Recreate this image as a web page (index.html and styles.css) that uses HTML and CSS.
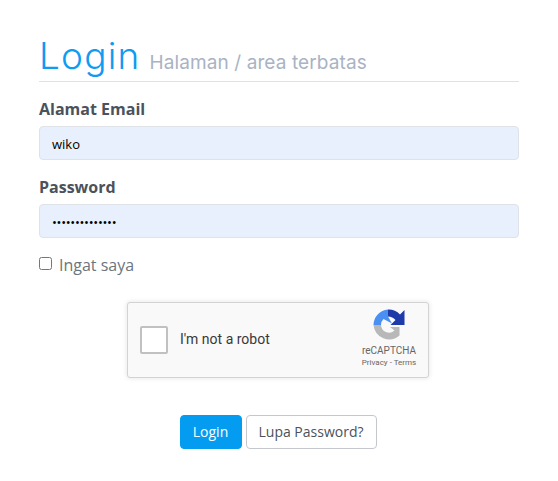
FILE: index.html
```html
<!DOCTYPE html>
<html lang="id">
<head>
<meta charset="utf-8">
<title>Login</title>
<link rel="stylesheet" href="styles.css">
</head>
<body>
<main class="panel">
  <h1 class="title"><span class="title-main">Login</span><small class="title-sub">Halaman / area terbatas</small></h1>
  <form class="form">
    <div class="field">
      <label class="label" for="email">Alamat Email</label>
      <input class="input" id="email" type="text" value="wiko">
    </div>
    <div class="field">
      <label class="label" for="pw">Password</label>
      <input class="input input-pw" id="pw" type="password" value="aaaaaaaaaaaaaa">
    </div>
    <label class="remember"><input class="check" type="checkbox"><span>Ingat saya</span></label>
    <div class="captcha-wrap">
      <div class="captcha">
        <span class="captcha-box"></span>
        <span class="captcha-text">I'm not a robot</span>
        <div class="captcha-brand">
          <svg class="captcha-logo" viewBox="0 0 32 32" width="32" height="32" aria-hidden="true">
            <path d="M15 .5 A15.5 15.5 0 0 0 .5 16 H8 A8 8 0 0 1 10.5 10 L19 14.5 L15 7.5 Z" fill="#4a90f2"/>
            <path d="M15 .5 A15.5 15.5 0 0 1 27 5.5 L31.5 1 V16 H17.5 L22.5 11 A10 10 0 0 0 15 7.5 Z" fill="#1c3aa9"/>
            <path d="M.5 16 H8 A8 8 0 0 0 21.5 21.5 L17 18 H26.5 V24 L26.5 26.5 A15.8 15.8 0 0 1 .5 16 Z" fill="#b8b8b8"/>
          </svg>
          <span class="captcha-name">reCAPTCHA</span>
          <span class="captcha-links">Privacy - Terms</span>
        </div>
      </div>
    </div>
    <div class="actions">
      <button class="btn btn-primary" type="button">Login</button>
      <button class="btn btn-light" type="button">Lupa Password?</button>
    </div>
  </form>
</main>
</body>
</html>
```
FILE: styles.css
```css
* { box-sizing: border-box; }
html, body { margin: 0; background: #fff; }
body {
  font-family: "Open Sans", "Liberation Sans", sans-serif;
  color: #4e5a66;
  font-size: 16px;
}
.panel { padding: 31px 39px 0 39px; }
.title {
  margin: 0 0 15px;
  height: 51px;
  border-bottom: 1px solid #dee2e6;
  font-family: Inter, "Open Sans", sans-serif;
  font-weight: 300;
  line-height: 49px;
  white-space: nowrap;
}
.title-main { font-size: 37px; color: #0f9bf2; letter-spacing: 1.2px; margin-right: 9px; }
.title-sub { font-size: 19px; font-weight: 400; color: #a9b3c3; letter-spacing: 0.1px; }
.field { margin-bottom: 15px; }
.label {
  display: block;
  font-weight: 700;
  font-size: 16px;
  line-height: 24px;
  color: #4b525b;
  margin-bottom: 5px;
}
.input {
  display: block;
  width: 100%;
  height: 34px;
  padding: 1px 12px 0;
  border: 1px solid #dfe2e6;
  border-radius: 4px;
  background: #e8f0fe;
  font-family: "Open Sans", sans-serif;
  font-size: 13px;
  color: #000;
  outline: 0;
}
.input-pw { letter-spacing: -0.3px; }
.remember {
  display: flex;
  align-items: center;
  height: 24px;
  margin-top: 4px;
  font-size: 16px;
  color: #6c757d;
}
.check { width: 13px; height: 13px; margin: 0 7px 0 0; position: relative; top: -2px; }
.captcha-wrap { display: flex; justify-content: center; margin-top: 25px; }
.captcha {
  width: 302px;
  height: 76px;
  display: flex;
  align-items: center;
  background: #f9f9f9;
  border: 1px solid #d3d3d3;
  border-radius: 3px;
  box-shadow: 0 0 4px 1px rgba(0,0,0,.08);
  font-family: Roboto, sans-serif;
  margin-right: 2px;
}
.captcha-box {
  width: 28px;
  height: 28px;
  margin-left: 12px;
  background: #fff;
  border: 2px solid #c1c1c1;
  border-radius: 2px;
}
.captcha-text { margin-left: 12px; padding-bottom: 2px; font-size: 14px; color: #383838; flex: 1; }
.captcha-brand {
  width: 70px;
  margin-right: 4px;
  display: flex;
  flex-direction: column;
  align-items: center;
  padding-bottom: 2px;
}
.captcha-logo { display: block; margin-bottom: 4px; }
.captcha-name { font-size: 10px; line-height: 12px; color: #666; }
.captcha-links { font-size: 8px; line-height: 12px; color: #666; }
.actions { display: flex; justify-content: center; gap: 4px; margin-top: 37px; margin-right: 2px; }
.btn {
  height: 34px;
  border-radius: 4px;
  font-family: "Open Sans", sans-serif;
  font-size: 14px;
  padding: 0;
  line-height: 1;
  white-space: nowrap;
}
.btn-primary { width: 62px; background: #049cf0; border: 1px solid #049cf0; color: #fff; }
.btn-light { width: 131px; background: #fff; border: 1px solid #c4c8cc; color: #4b525b; }
```
